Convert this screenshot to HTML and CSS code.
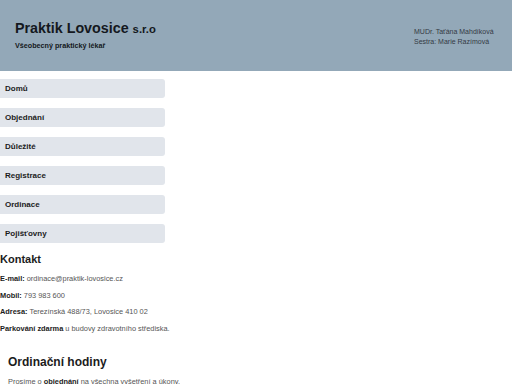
FILE: index.html
```html
<!DOCTYPE html>
<html lang="cs">
<head>
  <meta charset="UTF-8">
  <meta name="viewport" content="width=device-width, initial-scale=1.0">
  <title>Praktik Lovosice s.r.o</title>
  <link rel="stylesheet" href="styles.css">
</head>
<body>
  <header class="header">
    <div class="brand">
      <h1>Praktik Lovosice <span class="small">s.r.o</span></h1>
      <p class="subtitle">Všeobecný praktický lékař</p>
    </div>
    <div class="staff">
      <p>MUDr. Taťána Mahdíková</p>
      <p>Sestra: Marie Razímová</p>
    </div>
  </header>

  <nav class="menu">
    <a href="#">Domů</a>
    <a href="#">Objednání</a>
    <a href="#">Důležité</a>
    <a href="#">Registrace</a>
    <a href="#">Ordinace</a>
    <a href="#">Pojišťovny</a>
  </nav>

  <!-- Kontaktní údaje -->
  <section class="contact">
    <h2>Kontakt</h2>
    <p><b>E-mail:</b> ordinace@praktik-lovosice.cz</p>
    <p><b>Mobil:</b> 793 983 600</p>
    <p><b>Adresa:</b> Terezínská 488/73, Lovosice 410 02</p>
    <p><b>Parkování zdarma</b> u budovy zdravotního střediska.</p>
  </section>

  <section class="hours">
    <h2>Ordinační hodiny</h2>
    <p>Prosíme o <b>objednání</b> na všechna vyšetření a úkony.</p>
  </section>
</body>
</html>
```

FILE: styles.css
```css
body {
  font-family: "Liberation Sans", Arial, sans-serif;
  background-color: #ffffff;
  margin: 0;
  color: #1c1c1c;
}

p {
  margin: 0;
}

.header {
  display: flex;
  height: 71px;
  box-sizing: border-box;
  padding: 20px 0 0 15px;
  background-color: #93a8b8;
}

.brand {
  flex: 1;
}

.brand h1 {
  margin: 0;
  font-size: 14.3px;
  line-height: 16px;
  font-weight: bold;
  color: #141820;
}

.brand .small {
  font-size: 11.3px;
}

.subtitle {
  margin-top: 4px;
  font-size: 7.2px;
  line-height: 9px;
  font-weight: bold;
  color: #141820;
}

.staff {
  width: 98px;
  margin-top: 7px;
  font-size: 7px;
  line-height: 9.5px;
  color: #333a44;
}

.menu {
  display: flex;
  flex-direction: column;
  gap: 10px;
  width: 165px;
  margin-top: 8px;
}

.menu a {
  display: block;
  height: 19px;
  padding-left: 5px;
  font-size: 8px;
  line-height: 19px;
  font-weight: bold;
  color: #1c1c1c;
  text-decoration: none;
  background-color: #e1e5eb;
  border-radius: 0 3px 3px 0;
}

.contact h2 {
  margin: 10px 0 8px;
  font-size: 11px;
  line-height: 13px;
}

.contact p {
  margin-bottom: 7.5px;
  font-size: 7.4px;
  line-height: 9px;
  color: #555;
}

.contact b {
  color: #1c1c1c;
}

.hours {
  padding-left: 8px;
}

.hours h2 {
  margin: 22px 0 8px;
  font-size: 12px;
  line-height: 14px;
}

.hours p {
  font-size: 7.4px;
  line-height: 9px;
  color: #555;
}

.hours b {
  color: #1c1c1c;
}
```
